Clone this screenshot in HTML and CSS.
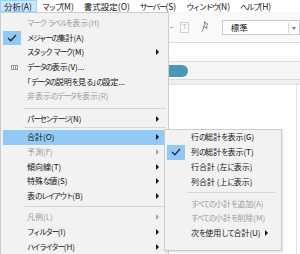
FILE: index.html
```html
<!DOCTYPE html>
<html lang="ja">
<head>
<meta charset="utf-8">
<link rel="stylesheet" href="styles.css">
</head>
<body>
<div class="menubar">
  <span class="mb-item active">分析(A)</span>
  <span class="mb-item"><span class="k">マップ</span>(M)</span>
  <span class="mb-item">書式設定(O)</span>
  <span class="mb-item"><span class="k">サーバー</span>(S)</span>
  <span class="mb-item"><span class="k">ウィンドウ</span>(N)</span>
  <span class="mb-item"><span class="k">ヘルプ</span>(H)</span>
</div>
<div class="app">
  <div class="toolbar">
    <span class="tb-dash"></span>
    <span class="tb-t">T</span>
    <svg class="tb-pin" width="10" height="14" viewBox="0 0 10 14"><path d="M4 1 L8 3.5 L6.5 5.5 L7 8.5 L2.5 6.5 L4.5 4.8 Z M3.5 7.5 L1 12.5" fill="none" stroke="#666" stroke-width="1"/></svg>
    <div class="tb-select"><span class="tb-val">標準</span><span class="tb-caret"></span></div>
  </div>
  <div class="gap-row"></div>
  <div class="shelf"><span class="pill"></span></div>
  <div class="shelf-foot"></div>
  <div class="canvas"></div>
</div>

<div class="menu main">
  <div class="item disabled"><span class="k">マーク</span>&nbsp;<span class="k">ラベルを</span>表示(H)</div>
  <div class="item"><span class="check"><svg width="10" height="8" viewBox="0 0 10 8"><polyline points="1,4 3.8,6.8 9,1" fill="none" stroke="#2b2b2b" stroke-width="1.3"/></svg></span><span class="k">メジャーの</span>集計(A)</div>
  <div class="item"><span class="k">スタック</span>&nbsp;<span class="k">マーク</span>(M)<span class="arrow"></span></div>
  <div class="item"><svg class="grid-ico" width="7" height="5" viewBox="0 0 7 5"><rect x="0" y="0" width="7" height="5" fill="#9a9a9a"/><rect x="1" y="1" width="1" height="3" fill="#f2f2f2"/><rect x="3" y="1" width="1" height="3" fill="#f2f2f2"/><rect x="5" y="1" width="1" height="3" fill="#f2f2f2"/></svg><span class="k">データの</span>表示(V)...</div>
  <div class="item"><span class="ob">「</span><span class="k">データの</span>説明<span class="k">を</span>見<span class="k">る</span><span class="cb">」</span><span class="k">の</span>設定...</div>
  <div class="item disabled">非表示<span class="k">のデータを</span>表示(R)</div>
  <div class="sep sep1"></div>
  <div class="item"><span class="k">パーセンテージ</span>(N)<span class="arrow"></span></div>
  <div class="sep sep2"></div>
  <div class="item hot">合計(O)<span class="arrow"></span></div>
  <div class="item disabled">予測(F)<span class="arrow"></span></div>
  <div class="item">傾向線(T)<span class="arrow"></span></div>
  <div class="item">特殊<span class="k">な</span>値(S)<span class="arrow"></span></div>
  <div class="item">表<span class="k">のレイアウト</span>(B)<span class="arrow"></span></div>
  <div class="sep sep3"></div>
  <div class="item disabled">凡例(L)<span class="arrow"></span></div>
  <div class="item"><span class="k">フィルター</span>(I)<span class="arrow"></span></div>
  <div class="item"><span class="k">ハイライター</span>(H)<span class="arrow"></span></div>
</div>

<div class="menu sub">
  <div class="item">行<span class="k">の</span>総計<span class="k">を</span>表示(G)</div>
  <div class="item"><span class="check"><svg width="10" height="8" viewBox="0 0 10 8"><polyline points="1,4 3.8,6.8 9,1" fill="none" stroke="#2b2b2b" stroke-width="1.3"/></svg></span>列<span class="k">の</span>総計<span class="k">を</span>表示(T)</div>
  <div class="item">行合計 (左<span class="k">に</span>表示)</div>
  <div class="item">列合計 (上<span class="k">に</span>表示)</div>
  <div class="sep sub-sep"></div>
  <div class="item disabled"><span class="k">すべての</span>小計<span class="k">を</span>追加(A)</div>
  <div class="item disabled"><span class="k">すべての</span>小計<span class="k">を</span>削除(M)</div>
  <div class="item">次<span class="k">を</span>使用<span class="k">して</span>合計(U)<span class="arrow"></span></div>
</div>
</body>
</html>
```

FILE: styles.css
```css
* { box-sizing: border-box; }
body {
  margin: 0;
  width: 300px;
  height: 254px;
  overflow: hidden;
  position: relative;
  background: #fff;
  font-family: "Noto Sans CJK JP", "Noto Sans", sans-serif;
  font-size: 8px;
  color: #111;
}
.k { font-size: 7.5px; letter-spacing: -1.3px; }
.ob { margin-left: -4px; }
.cb { letter-spacing: -4px; }
.menubar {
  display: flex;
  height: 12px;
  background: #fff;
  font-size: 8.5px;
}
.menubar .k { font-size: 8px; letter-spacing: -1.6px; }
.mb-item {
  line-height: 10px;
  padding: 0 4px 0 3px;
  margin-right: 1px;
  border: 1px solid transparent;
  white-space: nowrap;
}
.mb-item.active {
  background: #cce8ff;
  border-color: #99d1ff;
}
.app {
  display: flex;
  flex-direction: column;
  height: 242px;
}
.toolbar {
  height: 31px;
  background: #f9f9f9;
  border-bottom: 1px solid #dcdcdc;
  display: flex;
  align-items: center;
  padding-left: 170px;
}
.tb-dash {
  width: 3px;
  height: 1px;
  background: #aaa;
  margin-right: 7px;
}
.tb-t {
  width: 11px;
  height: 11px;
  border: 1px solid #d0d0d0;
  color: #bbb;
  font-family: "DejaVu Sans", sans-serif;
  font-size: 7px;
  line-height: 9px;
  text-align: center;
  margin-right: 12px;
}
.tb-pin { margin-right: 12px; }
.tb-select {
  width: 90px;
  height: 15px;
  border: 1px solid #c9c9c9;
  background: #fff;
  display: flex;
  align-items: center;
  padding-left: 8px;
  position: relative;
  font-size: 8.5px;
}
.tb-val { line-height: 13px; }
.tb-caret {
  position: absolute;
  left: 65px;
  top: 2px;
  height: 10px;
  width: 10px;
  border-left: 1px solid #d6d6d6;
}
.tb-caret::after {
  content: "";
  position: absolute;
  left: 3px;
  top: 4px;
  border-top: 3px solid #777;
  border-left: 2px solid transparent;
  border-right: 2px solid transparent;
}
.gap-row { height: 19px; background: #fff; border-bottom: 1px solid #dedede; }
.shelf {
  height: 18px;
  background: #f6f6f6;
  border-bottom: 1px solid #dadada;
  display: flex;
  align-items: center;
  padding-left: 120px;
}
.pill {
  width: 68px;
  height: 12px;
  border-radius: 6px;
  background: #4a97b6;
}
.shelf-foot { height: 5px; background: #efefef; border-bottom: 1px solid #e0e0e0; }
.canvas { flex: 1; background: #fff; margin-right: 3px; border-right: 1px solid #e3e3e3; }

.menu {
  position: absolute;
  background: #f2f2f2;
  border: 1px solid #cccccc;
}
.main {
  left: 0;
  top: 12px;
  width: 169px;
  height: 250px;
  padding-top: 3px;
}
.sub {
  left: 164px;
  top: 129px;
  width: 118px;
  padding: 0 0 9px;
  box-shadow: 1px 1px 2px rgba(0,0,0,0.12);
}
.item {
  position: relative;
  height: 14.6px;
  display: flex;
  align-items: center;
  padding-left: 24px;
  margin: 0 2px;
  white-space: nowrap;
  line-height: 12px;
}
.sub .item { height: 14.8px; }
.item.disabled { color: #9b9b9b; }
.item.hot { background: #91c9f7; }
.check {
  position: absolute;
  left: 0;
  top: 0;
  width: 18px;
  height: 100%;
  background: #90c8f6;
  display: flex;
  align-items: center;
  justify-content: center;
}
.grid-ico { position: absolute; left: 8px; top: 5px; }
.arrow {
  position: absolute;
  right: 7px;
  top: 50%;
  margin-top: -3px;
  border-left: 3px solid #111;
  border-top: 3px solid transparent;
  border-bottom: 3px solid transparent;
}
.disabled .arrow { border-left-color: #a6a6a6; }
.sub .arrow { right: 11px; }
.sep {
  height: 1px;
  background: #d7d7d7;
  margin-left: 22px;
  margin-right: 2px;
}
.sep1 { margin-top: 4px; margin-bottom: 3px; }
.sep2 { margin-top: 1px; margin-bottom: 2px; }
.sep3 { margin-top: 3px; margin-bottom: 3px; }
.sub-sep { margin-top: 3px; margin-bottom: 3px; margin-left: 22px; margin-right: 6px; }
```
